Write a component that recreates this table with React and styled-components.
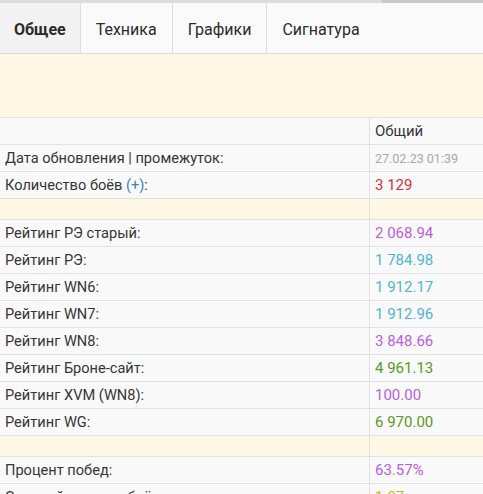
import styled, { createGlobalStyle } from "styled-components";

const Global = createGlobalStyle`
  html, body { margin: 0; padding: 0; background: #f9f9f9; }
  body { font-family: Roboto, "Noto Sans", sans-serif; color: #333; overflow: hidden; }
`;

const colors = {
    text: "#363636",
    line: "#e0e0e0",
    cream: "#fdf7e4",
    gray: "#a8a8a8",
    red: "#d62f3c",
    purple: "#b95ee3",
    cyan: "#4fb4d6",
    green: "#5b9826",
    yellow: "#cbb71c",
    blue: "#3f82c4",
};

const Page = styled.div`
  width: 483px;
  height: 494px;
  overflow: hidden;
  display: flex;
  flex-direction: column;
`;

const Scroll = styled.div`
  display: flex;
  height: 3px;
  flex: none;
`;

const ScrollPart = styled.div`
  background: ${p => p.$dark ? "#c8c8c8" : "#dcdcdc"};
  flex: ${p => p.$dark ? "none" : 1};
  width: ${p => p.$dark ? "101px" : "auto"};
`;

const Tabs = styled.div`
  display: flex;
  height: 50px;
  flex: none;
  background: #fafafa;
  border-bottom: 1px solid #dddddd;
`;

const Tab = styled.div`
  display: flex;
  align-items: center;
  padding: 2px ${p => p.$active ? 14 : 15}px 0 ${p => p.$active ? 14 : 15}px;
  font-size: 16px;
  font-weight: ${p => p.$active ? 700 : 400};
  background: ${p => p.$active ? "#f2f2f2" : "transparent"};
  border-right: 1px solid ${p => p.$last ? "transparent" : "#dddddd"};
  color: #2b2b2b;
`;

const Banner = styled.div`
  height: 63px;
  flex: none;
  background: ${colors.cream};
  border-bottom: 1px solid ${colors.line};
`;

const Table = styled.div`
  display: flex;
  flex-direction: column;
`;

const Row = styled.div`
  display: grid;
  grid-template-columns: 370px 1fr;
  height: ${p => p.$spacer ? "20px" : "26px"};
  border-bottom: 1px solid ${colors.line};
  background: ${p => p.$spacer ? colors.cream : "transparent"};
  font-size: 14.6px;
  color: ${colors.text};
`;

const Label = styled.div`
  display: flex;
  align-items: center;
  padding-left: 5px;
  border-right: 1px solid ${colors.line};
  white-space: nowrap;
`;

const Value = styled.div`
  display: flex;
  align-items: center;
  padding-left: 5px;
  white-space: nowrap;
  color: ${p => p.$color || colors.text};
  font-size: ${p => p.$small ? "12.5px" : "15px"};
`;

const Plus = styled.span`
  color: ${colors.blue};
`;

const rows = [
    { header: true },
    { label: "Дата обновления | промежуток:", value: "27.02.23 01:39", color: colors.gray, small: true },
    { label: <span>Количество боёв <Plus>(+)</Plus>:</span>, value: "3 129", color: colors.red },
    { spacer: true },
    { label: "Рейтинг РЭ старый:", value: "2 068.94", color: colors.purple },
    { label: "Рейтинг РЭ:", value: "1 784.98", color: colors.cyan },
    { label: "Рейтинг WN6:", value: "1 912.17", color: colors.cyan },
    { label: "Рейтинг WN7:", value: "1 912.96", color: colors.cyan },
    { label: "Рейтинг WN8:", value: "3 848.66", color: colors.purple },
    { label: "Рейтинг Броне-сайт:", value: "4 961.13", color: colors.green },
    { label: "Рейтинг XVM (WN8):", value: "100.00", color: colors.purple },
    { label: "Рейтинг WG:", value: "6 970.00", color: colors.green },
    { spacer: true },
    { label: "Процент побед:", value: "63.57%", color: colors.purple },
    { label: "Средний уровень боёв:", value: "1.07", color: colors.yellow },
];

export default function App() {
    const tabs = ["Общее", "Техника", "Графики", "Сигнатура"];
    return (
        <Page>
            <Global />
            <Scroll>
                <ScrollPart />
                <ScrollPart $dark />
            </Scroll>
            <Tabs>
                {tabs.map((t, i) => (
                    <Tab key={t} $active={i === 0} $last={i === tabs.length - 1}>{t}</Tab>
                ))}
            </Tabs>
            <Banner />
            <Table>
                {rows.map((r, i) => {
                    if (r.spacer) return <Row key={i} $spacer><Label /><Value /></Row>;
                    if (r.header) return <Row key={i}><Label /><Value>Общий</Value></Row>;
                    return (
                        <Row key={i}>
                            <Label>{r.label}</Label>
                            <Value $color={r.color} $small={r.small}>{r.value}</Value>
                        </Row>
                    );
                })}
            </Table>
        </Page>
    );
}
